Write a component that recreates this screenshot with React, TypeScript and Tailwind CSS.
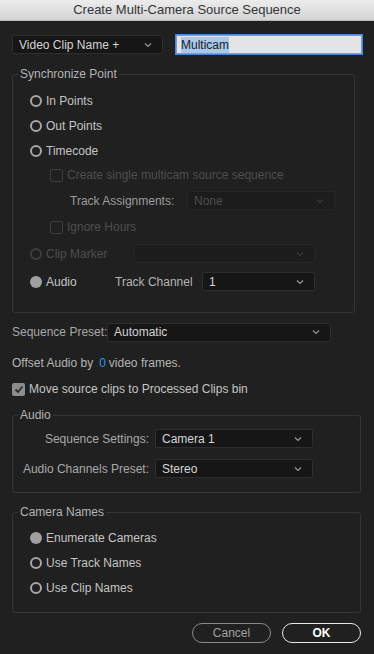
import { ReactNode } from 'react';

function Chevron({ dim = false }: { dim?: boolean }) {
  return (
    <svg width="8" height="6" viewBox="0 0 8 6" className="shrink-0">
      <path d="M1 1.5 L4 4.5 L7 1.5" fill="none" stroke={dim ? '#3a3a3a' : '#9a9a9a'} strokeWidth="1.1" />
    </svg>
  );
}

function Select({ value, className, dim = false }: { value: string; className: string; dim?: boolean }) {
  return (
    <div
      className={`flex h-[19px] shrink-0 items-center justify-between rounded-[2px] border pl-[6px] pr-[10px] ${
        dim ? 'border-[#262626] bg-[#1c1c1c] text-[#4e4e4e]' : 'border-[#2e2e2e] bg-[#161616] text-[#d4d4d4]'
      } ${className}`}
    >
      <span className="whitespace-nowrap">{value}</span>
      <Chevron dim={dim} />
    </div>
  );
}

function Radio({ label, checked = false, dim = false }: { label: string; checked?: boolean; dim?: boolean }) {
  return (
    <div className="flex items-center gap-[4px] whitespace-nowrap">
      {checked ? (
        <span className="block h-[12px] w-[12px] rounded-full bg-[#a0a0a0]" />
      ) : (
        <span
          className={`block h-[12px] w-[12px] rounded-full border-[2px] ${dim ? 'border-[#3e3e3e]' : 'border-[#a6a6a6]'}`}
        />
      )}
      <span className={dim ? 'text-[#4e4e4e]' : 'text-[#c4c4c4]'}>{label}</span>
    </div>
  );
}

function Checkbox({ label, checked = false, dim = false }: { label: string; checked?: boolean; dim?: boolean }) {
  return (
    <div className="flex items-center gap-[4px] whitespace-nowrap">
      {checked ? (
        <span className="flex h-[13px] w-[13px] items-center justify-center rounded-[2px] bg-[#8c8c8c]">
          <svg width="10" height="9" viewBox="0 0 10 9">
            <path d="M1.5 4.5 L4 7 L8.5 1.5" fill="none" stroke="#2a2a2a" strokeWidth="1.8" />
          </svg>
        </span>
      ) : (
        <span className="block h-[13px] w-[13px] rounded-[2px] border border-[#3e3e3e]" />
      )}
      <span className={dim ? 'text-[#4e4e4e]' : 'text-[#c4c4c4]'}>{label}</span>
    </div>
  );
}

function Group({ title, className, children }: { title: string; className: string; children: ReactNode }) {
  return (
    <fieldset className={`rounded-[3px] border border-[#353535] ${className}`}>
      <legend className="ml-[5px] h-[16px] px-[2px] leading-[16px] text-[#b4b4b4]">{title}</legend>
      {children}
    </fieldset>
  );
}

export default function App() {
  return (
    <div
      className="flex h-[654px] w-[374px] flex-col bg-[#202020] text-[12px] leading-[16px]"
      style={{ fontFamily: '"Liberation Sans", Arial, sans-serif' }}
    >
      {/* title bar */}
      <div className="flex h-[21px] items-center justify-center border-b border-[#b8b8b8] bg-gradient-to-b from-[#ececec] to-[#d4d4d4] text-[13px] text-[#363636]">
        Create Multi-Camera Source Sequence
      </div>

      <div className="flex flex-col px-[12px]">
        <div className="mt-[14px] flex h-[19px] items-center">
          <Select value="Video Clip Name +" className="w-[151px]" />
          <div className="ml-[13px] flex h-[19px] w-[186px] items-center border border-[#6e9fe0] bg-[#e4e4e6] px-[4px] text-[#1c1c1c] shadow-[0_0_0_1px_#4a86d8]">
            <span className="bg-[#a9c8ee]">Multicam</span>
          </div>
        </div>

        <Group title="Synchronize Point" className="mt-[12px] w-[343px] pb-[16px] pt-[6px]">
          <div className="flex flex-col pl-[17px]">
            <div className="flex h-[25px] items-center">
              <Radio label="In Points" />
            </div>
            <div className="flex h-[25px] items-center">
              <Radio label="Out Points" />
            </div>
            <div className="flex h-[25px] items-center">
              <Radio label="Timecode" />
            </div>
            <div className="flex h-[24px] items-center pl-[20px]">
              <Checkbox label="Create single multicam source sequence" dim />
            </div>
            <div className="flex h-[27px] items-center pl-[40px]">
              <span className="w-[117px] shrink-0 whitespace-nowrap text-[#9c9c9c]">Track Assignments:</span>
              <Select value="None" className="w-[148px]" dim />
            </div>
            <div className="flex h-[26px] items-center pl-[20px]">
              <Checkbox label="Ignore Hours" dim />
            </div>
            <div className="flex h-[27px] items-center">
              <div className="w-[104px] shrink-0">
                <Radio label="Clip Marker" dim />
              </div>
              <Select value="" className="w-[181px]" dim />
            </div>
            <div className="flex h-[29px] items-center">
              <div className="w-[85px] shrink-0">
                <Radio label="Audio" checked />
              </div>
              <span className="w-[87px] shrink-0 whitespace-nowrap text-[#b4b4b4]">Track Channel</span>
              <Select value="1" className="w-[113px]" />
            </div>
          </div>
        </Group>

        <div className="mt-[9px] flex h-[20px] items-center">
          <span className="w-[95px] shrink-0 whitespace-nowrap text-[#a8a8a8]">Sequence Preset:</span>
          <Select value="Automatic" className="w-[224px]" />
        </div>

        <div className="mt-[11px] flex h-[20px] items-center whitespace-nowrap text-[#b4b4b4]">
          <span>Offset Audio by</span>
          <span className="ml-[6px] mr-[3px] text-[#3b8fe6]">0</span>
          <span>video frames.</span>
        </div>

        <div className="mt-[6px] flex h-[20px] items-center">
          <Checkbox label="Move source clips to Processed Clips bin" checked />
        </div>

        <Group title="Audio" className="mt-[8px] w-[349px] pb-[14px] pt-[6px]">
          <div className="flex flex-col gap-[11px]">
            <div className="flex items-center">
              <span className="w-[142px] shrink-0 whitespace-nowrap pr-[6px] text-right text-[#a8a8a8]">
                Sequence Settings:
              </span>
              <Select value="Camera 1" className="w-[158px]" />
            </div>
            <div className="flex items-center">
              <span className="w-[142px] shrink-0 whitespace-nowrap pr-[6px] text-right text-[#a8a8a8]">
                Audio Channels Preset:
              </span>
              <Select value="Stereo" className="w-[158px]" />
            </div>
          </div>
        </Group>

        <Group title="Camera Names" className="mt-[11px] w-[349px] pb-[12px] pt-[5px]">
          <div className="flex flex-col pl-[17px]">
            <div className="flex h-[25px] items-center">
              <Radio label="Enumerate Cameras" checked />
            </div>
            <div className="flex h-[25px] items-center">
              <Radio label="Use Track Names" />
            </div>
            <div className="flex h-[25px] items-center">
              <Radio label="Use Clip Names" />
            </div>
          </div>
        </Group>

        <div className="mt-[10px] flex w-[349px] justify-end gap-[11px]">
          <div className="flex h-[20px] w-[79px] items-center justify-center rounded-full border border-[#8a8a8a] text-[#a0a0a0]">
            Cancel
          </div>
          <div className="flex h-[20px] w-[79px] items-center justify-center rounded-full border-[1.5px] border-[#e8e8e8] font-bold text-white">
            OK
          </div>
        </div>
      </div>
    </div>
  );
}
